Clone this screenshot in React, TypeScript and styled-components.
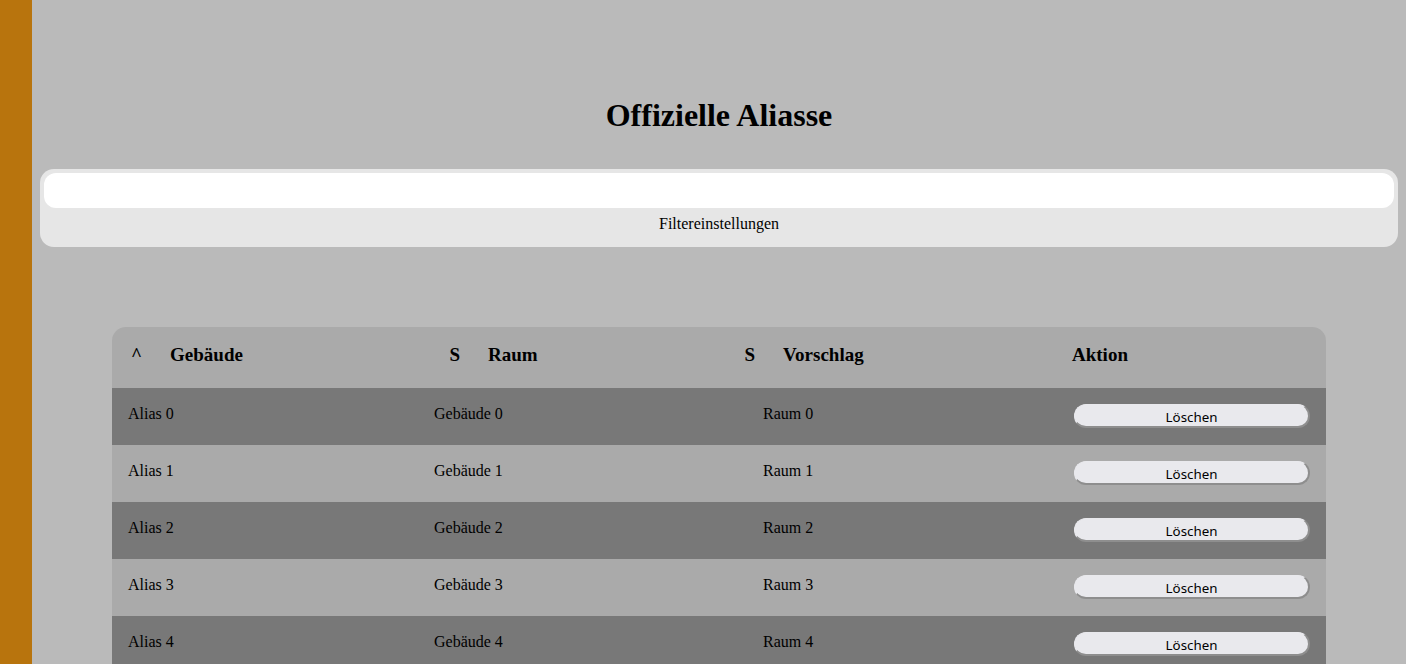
import React from "react";
import styled, { createGlobalStyle } from "styled-components";

const GlobalStyle = createGlobalStyle`
  html, body { margin: 0; padding: 0; }
  body {
    background: #bababa;
    font-family: "Liberation Serif", "Times New Roman", serif;
    color: #000;
  }
  * { box-sizing: border-box; }
`;

const Layout = styled.div`
  display: flex;
  min-height: 100vh;
`;

const Sidebar = styled.aside`
  width: 32px;
  flex: 0 0 32px;
  background: #b8740d;
`;

const Main = styled.main`
  flex: 1;
  display: flex;
  flex-direction: column;
  padding: 97px 8px 0;
`;

const Title = styled.h1`
  margin: 0 0 35px;
  font-size: 32px;
  font-weight: bold;
  text-align: center;
  line-height: 37px;
`;

const FilterBox = styled.section`
  background: #e6e6e6;
  border-radius: 14px;
  padding: 4px 4px 0;
  display: flex;
  flex-direction: column;
`;

const SearchInput = styled.input`
  height: 35px;
  border: none;
  border-radius: 12px;
  background: #fff;
  outline: none;
  padding: 0 12px;
  font: inherit;
`;

const FilterLabel = styled.div`
  text-align: center;
  font-size: 16px;
  line-height: 18px;
  padding: 7px 0 14px;
`;

const Table = styled.div`
  width: 1214px;
  margin: 80px auto 0;
  border-radius: 14px 14px 0 0;
  overflow: hidden;
`;

const HeaderRow = styled.div`
  height: 61px;
  background: #aaaaaa;
  display: grid;
  grid-template-columns: 318.5px 295px 327.5px 1fr;
  padding: 17px 0 0 19px;
  align-items: start;
`;

const HeaderCell = styled.div`
  display: flex;
  align-items: baseline;
  gap: 28px;
  font-size: 19px;
  font-weight: bold;
  line-height: 22px;
`;

const SortButton = styled.span`
  font: inherit;
  cursor: pointer;
`;

const Row = styled.div<{ $dark: boolean }>`
  height: 57px;
  background: ${(p) => (p.$dark ? "#787878" : "#aaaaaa")};
  display: grid;
  grid-template-columns: 306px 329px 311px 268px;
  align-items: start;
`;

const Cell = styled.div`
  padding: 17px 16px 0;
  font-size: 16px;
  line-height: 18px;
`;

const ActionCell = styled.div`
  padding: 16px 16px 0;
`;

const DeleteButton = styled.button`
  display: block;
  width: 100%;
  height: 24px;
  border-radius: 12px;
  border-style: solid;
  border-width: 1px 2px 2px 1px;
  border-color: #e9e9ed #8e8e8e #8e8e8e #e9e9ed;
  background: #e9e9ed;
  font-family: "Noto Sans", "Open Sans", sans-serif;
  font-size: 13.33px;
  color: #000;
  padding: 3px 0 0;
  line-height: 18px;
  cursor: pointer;
`;

const rows = Array.from({ length: 5 }, (_, i) => i);

export default function App() {
  return (
    <>
      <GlobalStyle />
      <Layout>
        <Sidebar />
        <Main>
          <Title>Offizielle Aliasse</Title>
          <FilterBox>
            <SearchInput type="text" />
            <FilterLabel>Filtereinstellungen</FilterLabel>
          </FilterBox>
          <Table>
            <HeaderRow>
              <HeaderCell>
                <SortButton>^</SortButton>
                <span>Gebäude</span>
              </HeaderCell>
              <HeaderCell>
                <SortButton>S</SortButton>
                <span>Raum</span>
              </HeaderCell>
              <HeaderCell>
                <SortButton>S</SortButton>
                <span>Vorschlag</span>
              </HeaderCell>
              <HeaderCell>
                <span>Aktion</span>
              </HeaderCell>
            </HeaderRow>
            {rows.map((i) => (
              <Row key={i} $dark={i % 2 === 0}>
                <Cell>Alias {i}</Cell>
                <Cell>Gebäude {i}</Cell>
                <Cell>Raum {i}</Cell>
                <ActionCell>
                  <DeleteButton>Löschen</DeleteButton>
                </ActionCell>
              </Row>
            ))}
          </Table>
        </Main>
      </Layout>
    </>
  );
}
